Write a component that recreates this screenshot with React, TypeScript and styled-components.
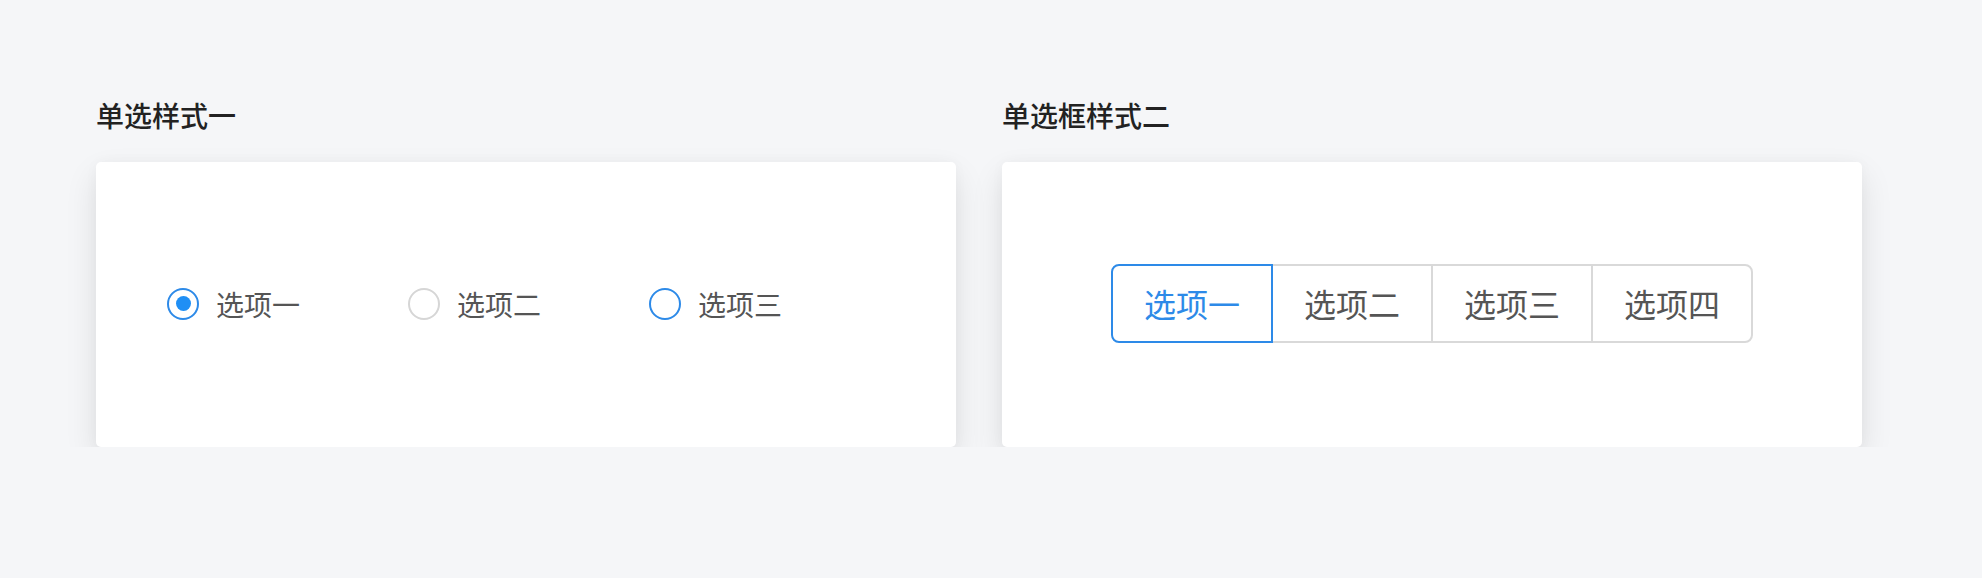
import styled, { createGlobalStyle } from "styled-components";

const GlobalStyle = createGlobalStyle`
    html, body {
        margin: 0;
        padding: 0;
        background: #f5f6f8;
        font-family: "Noto Sans CJK SC", "Noto Sans", sans-serif;
    }
`;

const Blue = "#2d8ae8";

const Page = styled.div`
    display: grid;
    grid-template-columns: 860px 860px;
    column-gap: 46px;
    padding: 95px 0 0 96px;
`;

const Section = styled.section`
    display: flex;
    flex-direction: column;
`;

const Title = styled.h2`
    margin: 0 0 27px 0;
    font-size: 28px;
    line-height: 40px;
    font-weight: 500;
    color: #222;
`;

const Card = styled.div<{ $center?: boolean }>`
    height: 285px;
    background: #fff;
    border-radius: 5px;
    box-shadow: 0 14px 32px rgba(0, 0, 0, 0.1), 0 0 14px rgba(0, 0, 0, 0.03);
    display: flex;
    align-items: center;
    justify-content: ${(p) => (p.$center ? "center" : "flex-start")};
    padding-left: ${(p) => (p.$center ? "0" : "71px")};
    padding-bottom: 2px;
    box-sizing: border-box;
`;

const RadioGroup = styled.div`
    display: flex;
    align-items: center;
    gap: 108px;
`;

const RadioItem = styled.label`
    display: flex;
    align-items: center;
    gap: 17px;
    font-size: 28px;
    line-height: 40px;
    color: #555;
    cursor: pointer;
`;

const Circle = styled.span<{ $tone: "checked" | "disabled" | "hover" }>`
    width: 32px;
    height: 32px;
    border-radius: 50%;
    box-sizing: border-box;
    border: 2px solid ${(p) => (p.$tone === "disabled" ? "#d6d6d6" : Blue)};
    display: flex;
    align-items: center;
    justify-content: center;

    &::after {
        content: "";
        display: ${(p) => (p.$tone === "checked" ? "block" : "none")};
        width: 15px;
        height: 15px;
        border-radius: 50%;
        background: #1f8ff5;
    }
`;

const Segmented = styled.div`
    display: flex;
`;

const Segment = styled.div<{ $active?: boolean }>`
    position: relative;
    z-index: ${(p) => (p.$active ? 1 : 0)};
    width: 162px;
    height: 79px;
    box-sizing: border-box;
    margin-left: -2px;
    padding-bottom: 2px;
    border: 2px solid ${(p) => (p.$active ? Blue : "#d9d9d9")};
    display: flex;
    align-items: center;
    justify-content: center;
    font-size: 32px;
    color: ${(p) => (p.$active ? Blue : "#555")};
    background: #fff;
    cursor: pointer;

    &:first-child {
        margin-left: 0;
        border-radius: 8px 0 0 8px;
    }
    &:last-child {
        border-radius: 0 8px 8px 0;
    }
`;

const radios = [
    { label: "选项一", tone: "checked" as const },
    { label: "选项二", tone: "disabled" as const },
    { label: "选项三", tone: "hover" as const },
];

const segments = ["选项一", "选项二", "选项三", "选项四"];

function App() {
    return (
        <>
            <GlobalStyle />
            <Page>
                <Section>
                    <Title>单选样式一</Title>
                    <Card>
                        <RadioGroup>
                            {radios.map((r) => (
                                <RadioItem key={r.label}>
                                    <Circle $tone={r.tone} />
                                    {r.label}
                                </RadioItem>
                            ))}
                        </RadioGroup>
                    </Card>
                </Section>
                <Section>
                    <Title>单选框样式二</Title>
                    <Card $center>
                        <Segmented>
                            {segments.map((s, i) => (
                                <Segment key={s} $active={i === 0}>
                                    {s}
                                </Segment>
                            ))}
                        </Segmented>
                    </Card>
                </Section>
            </Page>
        </>
    );
}

export default App;
